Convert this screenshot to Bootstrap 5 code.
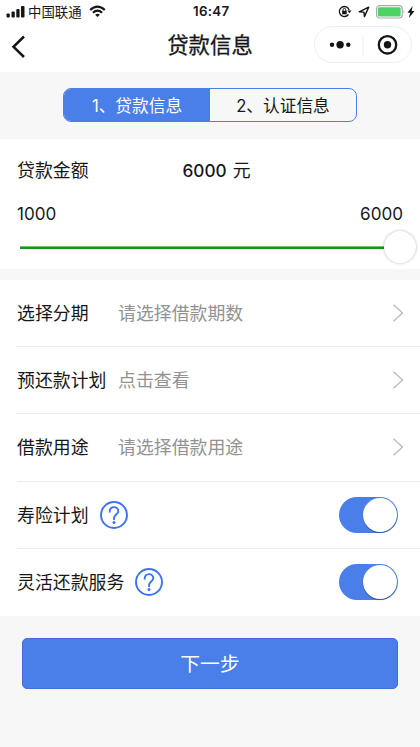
<!DOCTYPE html>
<html lang="zh-CN">
<head>
<meta charset="utf-8">
<meta name="viewport" content="width=device-width, initial-scale=1">
<title>贷款信息</title>
<link href="https://cdn.jsdelivr.net/npm/bootstrap@5.3.0/dist/css/bootstrap.min.css" rel="stylesheet">
<style>
:root { --brand: #4a7ee8; --ink: #171717; }
body { font-family: Inter, "Noto Sans CJK SC", sans-serif; font-size: 17.9px; line-height: 26px; color: var(--ink); background: #f7f7f7; min-height: 747px; overflow: hidden; }
svg { display: block; flex: none; }
.status-bar { height: 23px; padding: 0 5px 0 6px; font-size: 13.4px; line-height: 23px; }
.status-bar .clock { font-weight: 600; left: 193px; top: 0; letter-spacing: .3px; font-size: 13.3px; }
.carrier { margin-left: 2px; padding-top: 1px; }
.wifi { margin-left: 7px; }
.status-icons { gap: 6px; }
.battery { gap: 1px; }
.title-bar { height: 49px; padding: 3px 8px 0 11px; }
.title-bar h1 { font-size: 21.4px; line-height: 30px; font-weight: 400; left: 0; right: 0; top: 7px; -webkit-text-stroke: .3px var(--ink); }
.back { margin-top: 9px; }
.capsule { width: 98px; height: 37px; border: 1px solid #efefef; }
.tabs-area { height: 67px; padding: 16px 63px 0 63px; }
.steps { height: 34px; border: 1px solid var(--brand); border-radius: 8px; font-size: 16.7px; }
.steps > div { padding-top: 1px; }
.steps .step-on { background: var(--brand); width: 146px; color: #fff; }
.amount { height: 130px; padding: 19px 17px 0; }
.amount-value { left: 165.500px; }
.amount-value b { font-weight: 500; font-size: 17.2px; margin-right: 1px; }
.limits { margin-top: 17px; font-size: 17.1px; }
.track { height: 32px; margin: 4px -13px 0 3px; }
.track-line { height: 3px; background: #199414; border-top: 1px solid #6fc56c; }
.thumb { width: 32px; height: 32px; background: #fff; box-shadow: 0 0 3px rgba(0,0,0,.3); }
.rows { margin-top: 11px; padding-left: 17px; height: 335.500px; }
.cell-row { height: 67.2px; padding-right: 16px; border-bottom: 1px solid #ececec; }
.cell-row:last-child { border-bottom: 0; }
.cell-row > span { padding-top: 2px; }
.row-label { width: 101px; }
.hint { color: #929292; }
.help { margin-left: 10px; }
.switch { width: 59px; height: 36px; border-radius: 18px; background: var(--brand); padding: 1px; margin-right: 6px; }
.knob { width: 34px; height: 34px; background: #fff; box-shadow: 0 1px 1px rgba(0,0,0,.35); }
.btn-next { margin: 22.500px 22px 0; height: 51px; border-radius: 5px; background: var(--brand); border: 1px solid #416fd8; color: #fff; font-size: 19.8px; padding: 2px 0 0; }
.btn-next:hover { background: #3f70d6; color: #fff; }
</style>
</head>
<body>
<header class="bg-white">
  <div class="status-bar d-flex align-items-center position-relative">
    <svg width="20" height="12" viewBox="0 0 20 12" fill="#151515"><rect x=".5" y="7.500" width="3.300" height="4" rx="1"/><rect x="5.500" y="5.500" width="3.300" height="6" rx="1"/><rect x="10.300" y="3" width="3.300" height="8.500" rx="1"/><rect x="15" y="0" width="3.500" height="11.500" rx="1"/></svg>
    <span class="carrier">中国联通</span>
    <svg class="wifi" width="17" height="13" viewBox="0 0 17 13" fill="none" stroke="#151515" stroke-width="2.200"><path d="M1.200 5Q8.500-1.800 15.800 5M3.900 7.800Q8.500 3.600 13.100 7.800"/><path d="M8.500 12 6.100 9.700Q8.500 7.700 10.900 9.700Z" fill="#151515" stroke="none"/></svg>
    <span class="clock position-absolute">16:47</span>
    <div class="status-icons ms-auto d-flex align-items-center">
      <svg width="14" height="13" viewBox="0 0 14 13" fill="none" stroke="#151515" stroke-width="1.300"><path d="M10.400 9.500A5 5 0 1 1 11.200 5.200"/><path d="M9.300 5.500h4.200l-2.100 2.700z" fill="#151515" stroke="none"/><path d="M4.100 5.800h4.600v3.500H4.100z" fill="#151515" stroke="none"/><path d="M5 6V4.800a1.400 1.400 0 0 1 2.800 0V6" stroke-width="1"/></svg>
      <svg width="12" height="12" viewBox="0 0 12 12" fill="none" stroke="#151515" stroke-width="1.400" stroke-linejoin="round"><path d="M1.200 5.900 10.700 1.200 6.400 10.600 6 6.100Z"/></svg>
      <div class="battery d-flex align-items-center">
        <svg width="30" height="14" viewBox="0 0 30 14"><rect x=".6" y=".7" width="25.600" height="12.300" rx="3" fill="#fff" stroke="#aaa" stroke-width="1.200"/><rect x="1.900" y="2.200" width="22.800" height="9.300" rx="1.500" fill="#4bd464"/><path d="M27.500 4.800q1.800 2 0 4z" fill="#aaa"/></svg>
        <svg width="8" height="12" viewBox="0 0 8 12"><path d="M5.600 0 .5 6.700h2.700L1.900 12 7.500 5H4.600z" fill="#151515"/></svg>
      </div>
    </div>
  </div>
  <div class="title-bar d-flex align-items-start justify-content-between position-relative">
    <svg class="back" width="16" height="24" viewBox="0 0 16 24" fill="none" stroke="#151515" stroke-width="2.500"><path d="M13 1.500 2.500 11.800 13 22"/></svg>
    <h1 class="position-absolute text-center m-0">贷款信息</h1>
    <div class="capsule rounded-pill">
      <svg width="96" height="35" viewBox="0 0 96 35" fill="#151515"><circle cx="17" cy="17.800" r="2.200"/><circle cx="25.100" cy="17.800" r="3.700"/><circle cx="33.300" cy="17.800" r="2.200"/><path d="M48 8v21" stroke="#ededed"/><circle cx="72.500" cy="17.800" r="8.700" fill="none" stroke="#151515" stroke-width="2.300"/><circle cx="72.500" cy="17.800" r="3.700"/></svg>
    </div>
  </div>
</header>
<main>
  <div class="tabs-area">
    <div class="steps d-flex overflow-hidden">
      <div class="step-on d-flex align-items-center justify-content-center">1、贷款信息</div>
      <div class="flex-fill d-flex align-items-center justify-content-center">2、认证信息</div>
    </div>
  </div>
  <section class="amount bg-white">
    <div class="position-relative">贷款金额<span class="amount-value position-absolute"><b>6000</b> 元</span></div>
    <div class="limits d-flex justify-content-between"><span>1000</span><span>6000</span></div>
    <div class="track d-flex align-items-center"><div class="track-line flex-fill"></div><div class="thumb rounded-circle"></div></div>
  </section>
  <section class="rows bg-white">
    <div class="cell-row d-flex align-items-center"><span class="row-label">选择分期</span><span class="hint">请选择借款期数</span><svg class="ms-auto" width="12" height="18" viewBox="0 0 12 18" fill="none" stroke="#bcbcbc" stroke-width="1.400"><path d="M1.500.8 10.500 9l-9 8.200"/></svg></div>
    <div class="cell-row d-flex align-items-center"><span class="row-label">预还款计划</span><span class="hint">点击查看</span><svg class="ms-auto" width="12" height="18" viewBox="0 0 12 18" fill="none" stroke="#bcbcbc" stroke-width="1.400"><path d="M1.500.8 10.500 9l-9 8.200"/></svg></div>
    <div class="cell-row d-flex align-items-center"><span class="row-label">借款用途</span><span class="hint">请选择借款用途</span><svg class="ms-auto" width="12" height="18" viewBox="0 0 12 18" fill="none" stroke="#bcbcbc" stroke-width="1.400"><path d="M1.500.8 10.500 9l-9 8.200"/></svg></div>
    <div class="cell-row d-flex align-items-center"><span>寿险计划</span><svg class="help" width="30" height="30" viewBox="0 0 30 30" fill="none" stroke="#3d73f0" stroke-width="1.900"><circle cx="15" cy="15" r="13"/><path d="M10.700 11.700C10.700 5.600 19.300 5.800 19.300 11.200C19.300 14.500 15 14.700 15 18.300V19.200" stroke-linecap="round"/><circle cx="15" cy="22.600" r="1.500" fill="#3d73f0" stroke="none"/></svg><div class="switch ms-auto d-flex justify-content-end"><div class="knob rounded-circle"></div></div></div>
    <div class="cell-row d-flex align-items-center"><span>灵活还款服务</span><svg class="help" width="30" height="30" viewBox="0 0 30 30" fill="none" stroke="#3d73f0" stroke-width="1.900"><circle cx="15" cy="15" r="13"/><path d="M10.700 11.700C10.700 5.600 19.300 5.800 19.300 11.200C19.300 14.500 15 14.700 15 18.300V19.200" stroke-linecap="round"/><circle cx="15" cy="22.600" r="1.500" fill="#3d73f0" stroke="none"/></svg><div class="switch ms-auto d-flex justify-content-end"><div class="knob rounded-circle"></div></div></div>
  </section>
  <div class="d-grid"><button type="button" class="btn btn-next">下一步</button></div>
</main>
<script src="https://cdn.jsdelivr.net/npm/bootstrap@5.3.0/dist/js/bootstrap.bundle.min.js"></script>
</body>
</html>
